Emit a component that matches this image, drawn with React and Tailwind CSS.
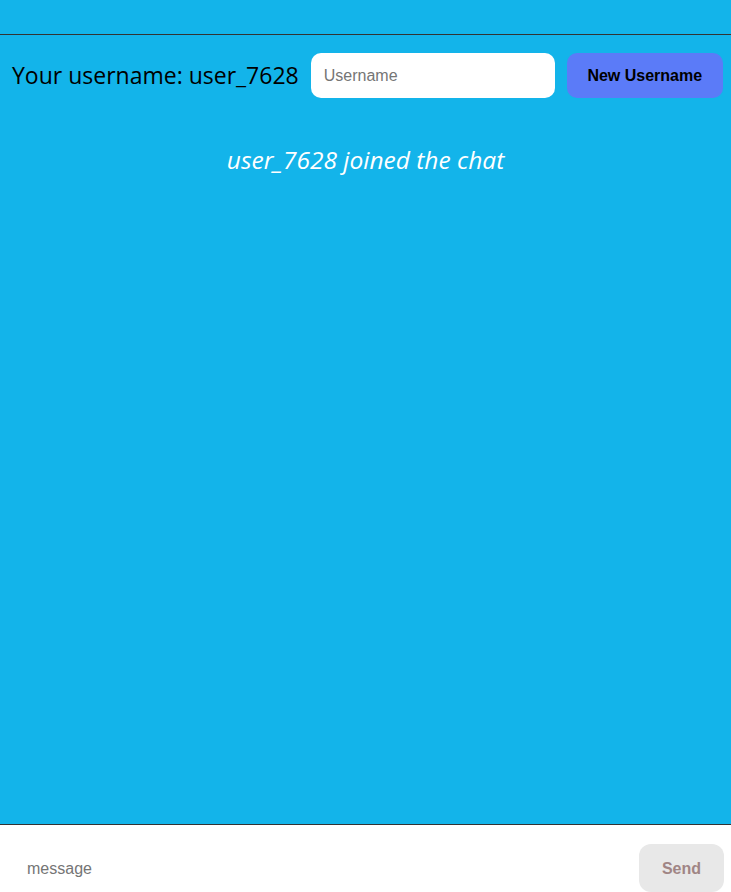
export default function App() {
  return (
    <div className="h-[892px] w-[731px] overflow-hidden bg-[#13b4ea] flex flex-col" style={{ fontFamily: "'Noto Sans', sans-serif" }}>
      <div className="h-[34px] shrink-0" />
      <div className="border-t border-[#333333] flex-1 flex flex-col">
        <div className="flex items-center pt-[18px] pl-[12px]">
          <span className="text-[23px] text-black font-['Open_Sans',sans-serif] leading-none whitespace-nowrap">Your username: user_7628</span>
          <input
            placeholder="Username"
            className="ml-[12px] h-[45px] w-[244px] shrink-0 rounded-[10px] bg-white px-[13px] text-[16px] text-black outline-none placeholder:text-[#757575] font-['Liberation_Sans',sans-serif]"
          />
          <button className="ml-[12px] h-[45px] w-[156px] shrink-0 rounded-[10px] bg-[#5b7bf8] text-[16px] font-bold text-black font-['Liberation_Sans',sans-serif]">
            New Username
          </button>
        </div>
        <div className="mt-[44px] text-center text-white italic text-[24.5px] font-['Open_Sans',sans-serif]">
          user_7628 joined the chat
        </div>
      </div>
      <div className="h-[68px] shrink-0 border-t border-[#333333] bg-white flex items-start">
        <input
          placeholder="message"
          className="mt-[32px] ml-[27px] flex-1 text-[16px] outline-none placeholder:text-[#757575] font-['Liberation_Sans',sans-serif]"
        />
        <button className="mt-[19px] mr-[7px] h-[48px] w-[85px] rounded-[12px] bg-[#e8e8e8] pt-[2px] text-[16px] font-bold text-[#a08585] font-['Liberation_Sans',sans-serif]">
          Send
        </button>
      </div>
    </div>
  );
}
